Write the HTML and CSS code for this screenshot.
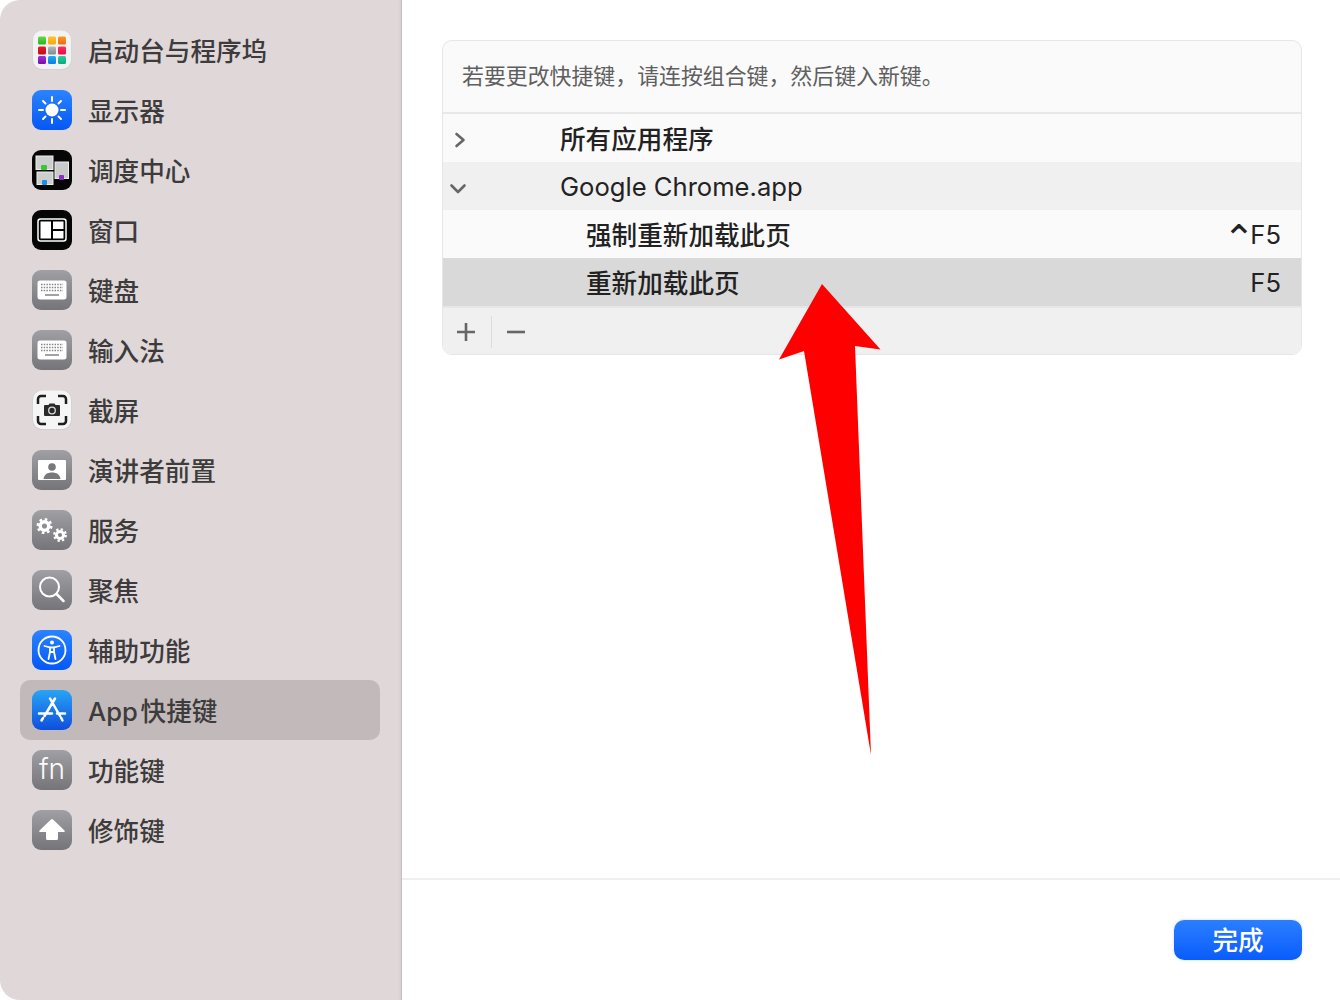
FILE: index.html
```html
<!DOCTYPE html>
<html lang="zh-CN">
<head>
    <meta charset="UTF-8">
    <title>键盘快捷键</title>
    <link rel="stylesheet" href="styles.css">
</head>
<body>
    <div class="window">
        <div class="sidebar">
            <div class="nav-item">
                <svg class="icon" viewBox="0 0 40 40">
                    <rect x="0.500" y="0.500" width="39" height="39.500" rx="9" fill="#d4d2d2"/>
                    <rect x="1" y="0.500" width="38" height="38.500" rx="9" fill="#f3f3f3"/>
                    <rect x="6" y="6.500" width="8" height="8" rx="1.500" fill="url(#c1)"/>
                    <rect x="16" y="6.500" width="8" height="8" rx="1.500" fill="url(#c2)"/>
                    <rect x="26" y="6.500" width="8" height="8" rx="1.500" fill="url(#c3)"/>
                    <rect x="6" y="16.500" width="8" height="8" rx="1.500" fill="url(#c4)"/>
                    <rect x="16" y="16.500" width="8" height="8" rx="1.500" fill="url(#c5)"/>
                    <rect x="26" y="16.500" width="8" height="8" rx="1.500" fill="url(#c6)"/>
                    <rect x="6" y="26" width="8" height="8" rx="1.500" fill="url(#c7)"/>
                    <rect x="16" y="26" width="8" height="8" rx="1.500" fill="url(#c8)"/>
                    <rect x="26" y="26" width="8" height="8" rx="1.500" fill="url(#c9)"/>
                </svg>
                <span>启动台与程序坞</span>
            </div>
            <div class="nav-item">
                <svg class="icon" viewBox="0 0 40 40">
                    <rect width="40" height="40" rx="9" fill="url(#blue)"/>
                    <circle cx="20" cy="20" r="6.500" fill="#fff"/>
                    <path d="M20 7v4M20 29v4M7 20h4M29 20h4M11 11l2.500 2.500M26.500 26.500L29 29M11 29l2.500-2.500M26.500 13.500L29 11" stroke="#fff" stroke-width="2" stroke-linecap="round"/>
                </svg>
                <span>显示器</span>
            </div>
            <div class="nav-item">
                <svg class="icon" viewBox="0 0 40 40">
                    <rect width="40" height="40" rx="9" fill="#060606"/>
                    <rect x="4" y="6" width="17" height="13.500" fill="#cdcfcf" stroke="#eee"/>
                    <rect x="5" y="22" width="16" height="12.500" fill="#cdcfcf" stroke="#eee"/>
                    <rect x="23" y="12" width="13.500" height="16.500" fill="#c9cbcb" stroke="#eee"/>
                    <rect x="9" y="15" width="6" height="5" rx="1" fill="#36c832"/>
                    <rect x="10" y="30" width="5" height="5" rx="1" fill="#1c8fe8"/>
                    <rect x="27" y="25" width="5" height="5" rx="1" fill="#8c32c8"/>
                </svg>
                <span>调度中心</span>
            </div>
            <div class="nav-item">
                <svg class="icon" viewBox="0 0 40 40">
                    <rect width="40" height="40" rx="9" fill="#050505"/>
                    <rect x="6" y="9" width="28" height="22" rx="2.500" fill="none" stroke="#fff" stroke-width="1.500"/>
                    <rect x="8.500" y="11.500" width="10.500" height="17" fill="#fff"/>
                    <rect x="21" y="11.500" width="10.500" height="7.500" fill="#fff"/>
                    <rect x="21" y="21" width="10.500" height="7.500" fill="#fff"/>
                </svg>
                <span>窗口</span>
            </div>
            <div class="nav-item">
                <svg class="icon" viewBox="0 0 40 40">
                    <rect width="40" height="40" rx="9" fill="url(#grey)"/>
                    <rect x="5.500" y="10.500" width="29" height="19" rx="2.500" fill="#fff"/>
                    <path d="M9 14.500h22M9 17.500h22M9 20.500h22" stroke="#85858a" stroke-width="1.500" stroke-dasharray="1.500 1.200"/>
                    <path d="M13 25h14" stroke="#85858a" stroke-width="1.500"/>
                </svg>
                <span>键盘</span>
            </div>
            <div class="nav-item">
                <svg class="icon" viewBox="0 0 40 40">
                    <rect width="40" height="40" rx="9" fill="url(#grey)"/>
                    <rect x="5.500" y="10.500" width="29" height="19" rx="2.500" fill="#fff"/>
                    <path d="M9 14.500h22M9 17.500h22M9 20.500h22" stroke="#85858a" stroke-width="1.500" stroke-dasharray="1.500 1.200"/>
                    <path d="M13 25h14" stroke="#85858a" stroke-width="1.500"/>
                </svg>
                <span>输入法</span>
            </div>
            <div class="nav-item">
                <svg class="icon" viewBox="0 0 40 40">
                    <rect x="0.500" y="0.500" width="39" height="39.500" rx="9" fill="#cfcdcd"/>
                    <rect x="1" y="0.500" width="38" height="38.500" rx="9" fill="#f5f5f5"/>
                    <path d="M6 14V9a3 3 0 0 1 3-3h5M26 6h5a3 3 0 0 1 3 3v5M34 26v5a3 3 0 0 1-3 3h-5M14 34H9a3 3 0 0 1-3-3v-5" fill="none" stroke="#1d1d1d" stroke-width="2.500"/>
                    <path d="M13 15h3.500l1-1.500h5l1 1.500H27a1 1 0 0 1 1 1v9a1 1 0 0 1-1 1H13a1 1 0 0 1-1-1v-9a1 1 0 0 1 1-1z" fill="#2a2a2a"/>
                    <circle cx="20" cy="20.500" r="3.300" fill="none" stroke="#ddd" stroke-width="1.300"/>
                </svg>
                <span>截屏</span>
            </div>
            <div class="nav-item">
                <svg class="icon" viewBox="0 0 40 40">
                    <rect width="40" height="40" rx="9" fill="url(#grey)"/>
                    <rect x="6" y="10" width="28" height="20" rx="1" fill="#fff"/>
                    <circle cx="20" cy="17" r="3.800" fill="#77777c"/>
                    <path d="M11.500 29c.6-4.500 4-6.500 8.500-6.500s7.900 2 8.500 6.500z" fill="#77777c"/>
                </svg>
                <span>演讲者前置</span>
            </div>
            <div class="nav-item">
                <svg class="icon" viewBox="0 0 40 40">
                    <rect width="40" height="40" rx="9" fill="url(#grey)"/>
                    <circle cx="12.500" cy="16" r="4.300" fill="none" stroke="#fff" stroke-width="3.500"/>
                    <circle cx="12.500" cy="16" r="6.800" fill="none" stroke="#fff" stroke-width="2.400" stroke-dasharray="2.600 2.740"/>
                    <circle cx="28" cy="25" r="3.600" fill="none" stroke="#fff" stroke-width="3"/>
                    <circle cx="28" cy="25" r="5.800" fill="none" stroke="#fff" stroke-width="2.200" stroke-dasharray="2.300 2.250"/>
                </svg>
                <span>服务</span>
            </div>
            <div class="nav-item">
                <svg class="icon" viewBox="0 0 40 40">
                    <rect width="40" height="40" rx="9" fill="url(#grey)"/>
                    <circle cx="17.500" cy="17" r="9.500" fill="none" stroke="#fff" stroke-width="2"/>
                    <path d="M24.500 24l7 7" stroke="#fff" stroke-width="2.500" stroke-linecap="round"/>
                </svg>
                <span>聚焦</span>
            </div>
            <div class="nav-item">
                <svg class="icon" viewBox="0 0 40 40">
                    <rect width="40" height="40" rx="9" fill="url(#blue)"/>
                    <circle cx="20" cy="20" r="13.500" fill="none" stroke="#fff" stroke-width="1.800"/>
                    <circle cx="20" cy="12.500" r="2" fill="#fff"/>
                    <path d="M12.500 16l5.500 1.500v4.500l-1.500 7M27.500 16L22 17.500v4.500l1.500 7M18 17.500h4M18 22h4" fill="none" stroke="#fff" stroke-width="1.800" stroke-linecap="round"/>
                </svg>
                <span>辅助功能</span>
            </div>
            <div class="nav-item active">
                <svg class="icon" viewBox="0 0 40 40">
                    <rect width="40" height="40" rx="9" fill="url(#store)"/>
                    <path d="M18 8.500l10 17.500M23 8.500L12.500 26M7 23.500h13M25 23.500h8M11 28l-1.500 2.500M29 27.500l1.500 3" fill="none" stroke="#fff" stroke-width="2.500" stroke-linecap="round"/>
                </svg>
                <span class="app-label">App 快捷键</span>
            </div>
            <div class="nav-item">
                <div class="icon fn-icon">fn</div>
                <span>功能键</span>
            </div>
            <div class="nav-item">
                <svg class="icon" viewBox="0 0 40 40">
                    <rect width="40" height="40" rx="9" fill="url(#grey)"/>
                    <path d="M19 9.500a1.500 1.500 0 0 1 2 0l11.500 11c.6.700.3 1.500-.6 1.500H26v6.500a1.500 1.500 0 0 1-1.500 1.500h-9a1.500 1.500 0 0 1-1.500-1.500V22H8.100c-.9 0-1.200-.8-.6-1.500z" fill="#fff"/>
                </svg>
                <span>修饰键</span>
            </div>
        </div>

        <div class="main">
            <div class="content">
                <div class="panel">
                    <div class="panel-note">若要更改快捷键，请连按组合键，然后键入新键。</div>
                    <div class="row">
                        <svg class="chevron" viewBox="0 0 20 20"><path d="M5.500 6l7 6-7 6" fill="none" stroke="#666" stroke-width="2.600" stroke-linecap="round" stroke-linejoin="round"/></svg>
                        <span class="row-title cjk">所有应用程序</span>
                    </div>
                    <div class="row row-group">
                        <svg class="chevron chevron-open" viewBox="0 0 20 20"><path d="M2.500 9.500L9 16l6.500-6.500" fill="none" stroke="#666" stroke-width="2.600" stroke-linecap="round" stroke-linejoin="round"/></svg>
                        <span class="row-title">Google Chrome.app</span>
                    </div>
                    <div class="row row-child">
                        <span class="cjk">强制重新加载此页</span>
                        <span class="keys"><span class="ctrl">⌃</span>F5</span>
                    </div>
                    <div class="row row-child row-selected">
                        <span class="cjk">重新加载此页</span>
                        <span class="keys">F5</span>
                    </div>
                    <div class="panel-tools">
                        <svg class="tool" viewBox="0 0 20 20"><path d="M10 1v18M1 10h18" stroke="#666" stroke-width="2.600"/></svg>
                        <div class="tool-sep"></div>
                        <svg class="tool" viewBox="0 0 20 20"><path d="M1 10h18" stroke="#666" stroke-width="2.600"/></svg>
                    </div>
                </div>
            </div>
            <div class="footer">
                <button class="btn-done"><span>完成</span></button>
            </div>
        </div>
    </div>

    <!-- red arrow drawn on top of the screenshot -->
    <svg class="arrow" width="1340" height="1000" viewBox="0 0 1340 1000">
        <polygon points="822,284 880.500,349.500 855,346 871,755 804,351 779,359.500" fill="#ff0000"/>
    </svg>

    <!-- shared gradients -->
    <svg class="defs" width="0" height="0">
        <defs>
            <linearGradient id="blue" x1="0" y1="0" x2="0" y2="1"><stop offset="0" stop-color="#2a84ff"/><stop offset="1" stop-color="#0657f5"/></linearGradient>
            <linearGradient id="grey" x1="0" y1="0" x2="0" y2="1"><stop offset="0" stop-color="#a0a0a4"/><stop offset="1" stop-color="#757579"/></linearGradient>
            <linearGradient id="store" x1="0" y1="0" x2="0" y2="1"><stop offset="0" stop-color="#28a4f5"/><stop offset="1" stop-color="#0f4fdc"/></linearGradient>
            <linearGradient id="c1" x1="0" y1="0" x2="0" y2="1"><stop offset="0" stop-color="#62d94a"/><stop offset="1" stop-color="#2bb51f"/></linearGradient>
            <linearGradient id="c2" x1="0" y1="0" x2="0" y2="1"><stop offset="0" stop-color="#fdc42a"/><stop offset="1" stop-color="#f7a80a"/></linearGradient>
            <linearGradient id="c3" x1="0" y1="0" x2="0" y2="1"><stop offset="0" stop-color="#fa9a2a"/><stop offset="1" stop-color="#ec6a0c"/></linearGradient>
            <linearGradient id="c4" x1="0" y1="0" x2="0" y2="1"><stop offset="0" stop-color="#e2222a"/><stop offset="1" stop-color="#c40a18"/></linearGradient>
            <linearGradient id="c5" x1="0" y1="0" x2="0" y2="1"><stop offset="0" stop-color="#b5bcc0"/><stop offset="1" stop-color="#7d8b90"/></linearGradient>
            <linearGradient id="c6" x1="0" y1="0" x2="0" y2="1"><stop offset="0" stop-color="#f9305c"/><stop offset="1" stop-color="#e90c44"/></linearGradient>
            <linearGradient id="c7" x1="0" y1="0" x2="0" y2="1"><stop offset="0" stop-color="#a030d8"/><stop offset="1" stop-color="#7410b0"/></linearGradient>
            <linearGradient id="c8" x1="0" y1="0" x2="0" y2="1"><stop offset="0" stop-color="#20aaf5"/><stop offset="1" stop-color="#0a7fe0"/></linearGradient>
            <linearGradient id="c9" x1="0" y1="0" x2="0" y2="1"><stop offset="0" stop-color="#25cfa0"/><stop offset="1" stop-color="#0da878"/></linearGradient>
        </defs>
    </svg>
</body>
</html>
```

FILE: styles.css
```css
* {
    margin: 0;
    padding: 0;
    box-sizing: border-box;
}

body {
    width: 1340px;
    height: 1000px;
    overflow: hidden;
    background: white;
    font-family: Inter, 'Noto Sans CJK SC', sans-serif;
    color: #222;
}

.window {
    display: flex;
    height: 1000px;
}

.sidebar {
    width: 402px;
    flex-shrink: 0;
    padding: 20px 21px 0 20px;
    background: #dfd7d8;
    border-right: 1px solid #c4bfc0;
    border-radius: 20px 0 0 20px;
    box-shadow: inset -3px 0 3px -2px rgba(0, 0, 0, 0.06);
}

.nav-item {
    display: flex;
    align-items: center;
    gap: 16px;
    height: 60px;
    padding-left: 12px;
    border-radius: 10px;
    font-size: 25.6px;
    font-weight: 500;
    color: #3d3b3b;
}

.nav-item > span {
    padding-bottom: 2px;
}

.nav-item .app-label {
    word-spacing: -4px;
}

.nav-item.active {
    background: #c2b9ba;
}

.icon {
    width: 40px;
    height: 40px;
    flex-shrink: 0;
}

.fn-icon {
    border-radius: 9px;
    background: linear-gradient(#a0a0a4, #757579);
    color: #fafafa;
    font-size: 28px;
    font-weight: 300;
    line-height: 39px;
    text-align: center;
}

.main {
    flex: 1;
    display: flex;
    flex-direction: column;
}

.content {
    flex: 1;
    padding: 40px 38px 0 40px;
}

.panel {
    border: 1px solid #e6e6e6;
    border-radius: 10px;
    background: #fafafa;
    overflow: hidden;
}

.panel-note {
    height: 73px;
    padding-left: 19px;
    border-bottom: 2px solid #e8e8e8;
    font-size: 21.9px;
    line-height: 71px;
    color: #5f5f5f;
}

.row {
    display: flex;
    align-items: center;
    height: 48px;
    font-size: 25.6px;
    color: #222;
}

.cjk {
    padding-bottom: 2px;
    font-weight: 500;
}

.row-group {
    background: #f0f0f0;
}

.row-child {
    justify-content: space-between;
    padding: 0 20px 0 143px;
}

.row-selected {
    background: #d9d9d9;
}

.keys {
    display: flex;
    align-items: center;
}

.ctrl {
    padding-top: 10px;
    font-family: 'DejaVu Sans', sans-serif;
    font-size: 38px;
    letter-spacing: -4.5px;
    line-height: 30px;
}

.chevron {
    width: 20px;
    height: 20px;
    margin-left: 8px;
    flex-shrink: 0;
}

.chevron-open {
    margin-left: 6px;
}

.row-title {
    margin-left: 89px;
}

.chevron-open + .row-title {
    margin-left: 91px;
}

.panel-tools {
    display: flex;
    align-items: center;
    height: 48px;
    padding: 2px 0 0 13px;
    border-top: 2px solid #e6e6e6;
    background: #f0f0f0;
}

.tool {
    width: 20px;
    height: 20px;
}

.tool-sep {
    width: 1px;
    height: 32px;
    margin: 0 14px 0 15px;
    background: #dcdcdc;
}

.footer {
    display: flex;
    justify-content: flex-end;
    align-items: center;
    height: 122px;
    padding-right: 38px;
    border-top: 2px solid #efefef;
}

.btn-done {
    width: 128px;
    height: 40px;
    padding-bottom: 5px;
    border: none;
    border-radius: 10px;
    background: linear-gradient(#2a7fff, #0a5cfb);
    box-shadow: 0 0 3px rgba(10, 92, 251, 0.25);
    color: white;
    font-family: inherit;
    font-size: 25.6px;
    font-weight: 500;
}

.arrow {
    position: absolute;
    top: 0;
    left: 0;
}

.defs {
    position: absolute;
}
```
